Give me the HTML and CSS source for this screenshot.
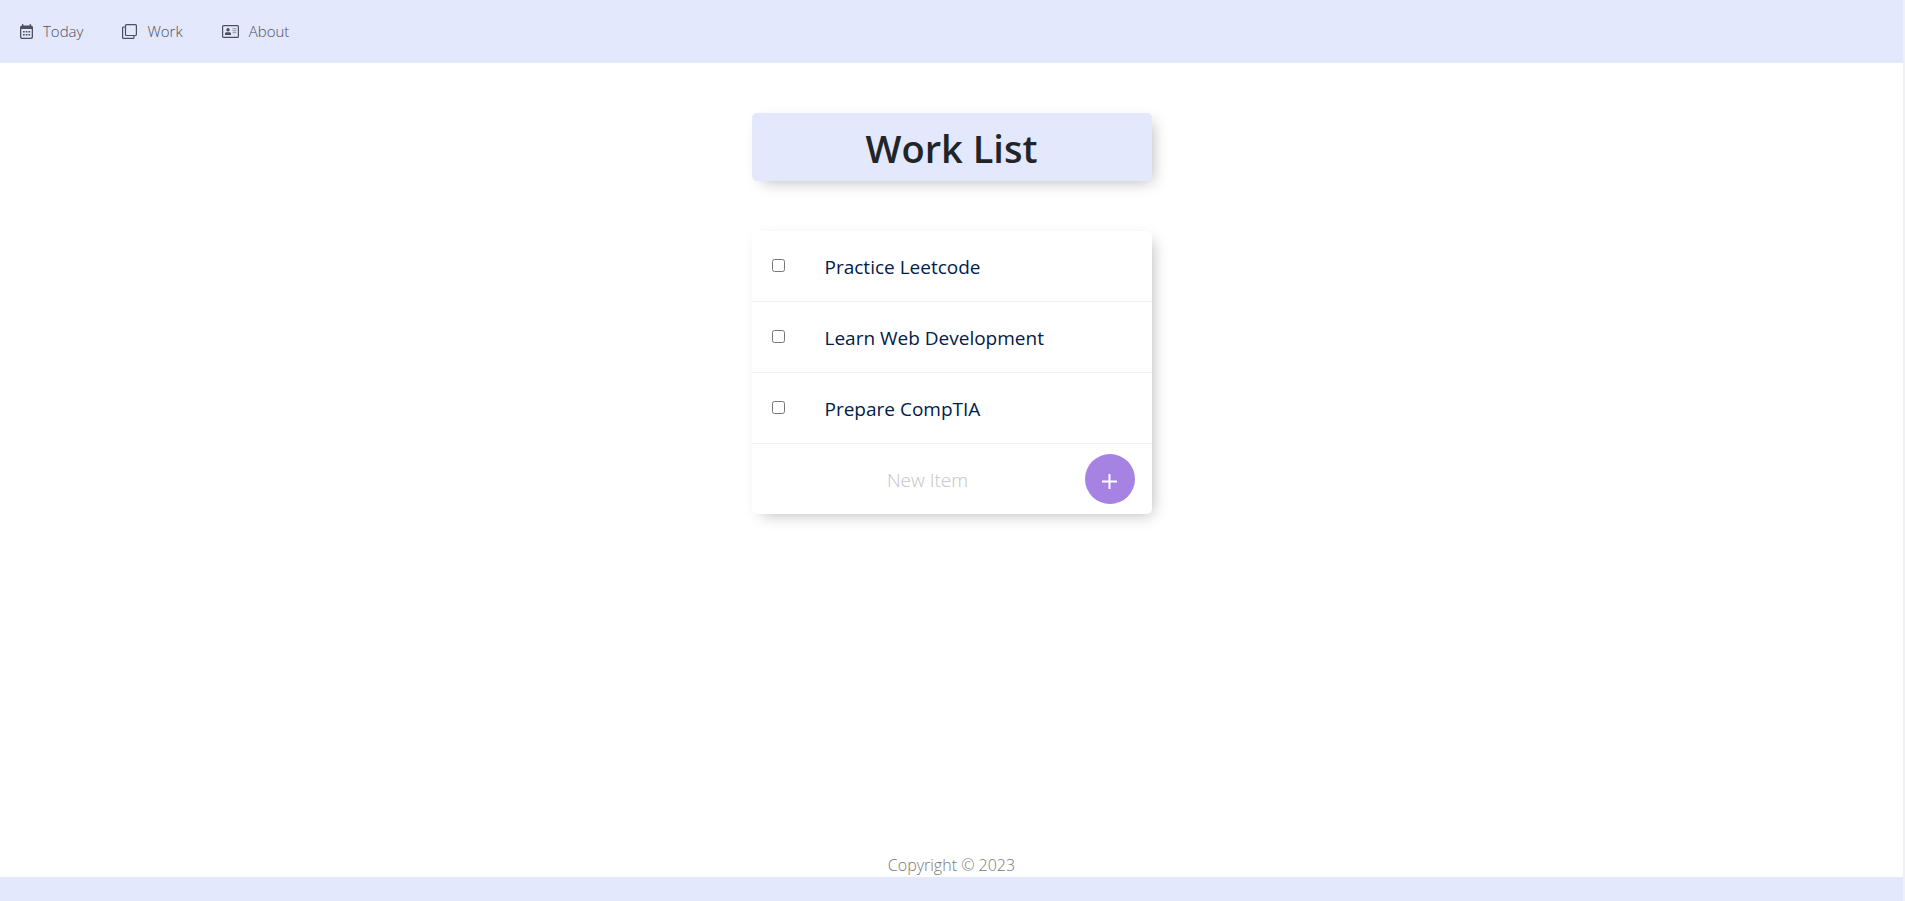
FILE: index.html
```html
<!DOCTYPE html>
<html lang="en">
<head>
<meta charset="utf-8">
<title>Work List</title>
<link rel="stylesheet" href="styles.css">
</head>
<body>
<nav class="navbar">
  <a class="nav-link" href="#today">
    <svg class="icon icon-today" viewBox="0 0 13 15" aria-hidden="true"><path fill="currentColor" fill-rule="evenodd" d="M2 1.5V.5Q2 0 2.7 0T3.4.5V1.5H9.6V.5Q9.6 0 10.3 0T11 .5V1.5Q13 1.5 13 3.5V13Q13 15 11 15H2Q0 15 0 13V3.5Q0 1.5 2 1.5ZM1.3 5V12.7Q1.3 13.7 2.3 13.7H10.7Q11.7 13.7 11.7 12.7V5Z"/><path fill="currentColor" d="M3 7h1.7v1.5H3zM5.7 7h1.7v1.5H5.7zM8.4 7h1.7v1.5H8.4zM3 10h1.7v1.5H3zM5.7 10h1.7v1.5H5.7zM8.4 10h1.7v1.5H8.4z"/></svg>
    <span>Today</span>
  </a>
  <a class="nav-link" href="#work">
    <svg class="icon icon-work" viewBox="0 0 15 15" aria-hidden="true"><g fill="none" stroke="currentColor" stroke-width="1.2"><rect x="3.5" y=".6" width="10.9" height="10.9" rx="1"/><path d="M3.5 3H1.6Q.6 3 .6 4V13.4Q.6 14.4 1.6 14.4H11Q12 14.4 12 13.4V11.5"/></g></svg>
    <span>Work</span>
  </a>
  <a class="nav-link" href="#about">
    <svg class="icon icon-about" viewBox="0 0 17 13" aria-hidden="true"><rect x=".6" y=".6" width="15.8" height="11.8" rx="1" fill="none" stroke="currentColor" stroke-width="1.2"/><g fill="currentColor"><circle cx="6" cy="4.7" r="1.7"/><path d="M3 10V8.7Q3 7.3 4.5 7.3H7.5Q9 7.3 9 8.7V10Z"/><path opacity=".55" d="M10.5 3.3h3.8v1h-3.8zM10.5 5.3h3.8v1h-3.8zM10.5 7.3h3.8v1h-3.8z"/></g></svg>
    <span>About</span>
  </a>
</nav>
<main class="content">
  <h1 class="card title">Work List</h1>
  <section class="card" aria-label="Work items">
    <label class="item"><input class="check" type="checkbox"><span>Practice Leetcode</span></label>
    <label class="item"><input class="check" type="checkbox"><span>Learn Web Development</span></label>
    <label class="item"><input class="check" type="checkbox"><span>Prepare CompTIA</span></label>
    <form class="new-item">
      <input class="new-text" type="text" placeholder="New Item" aria-label="New Item">
      <button class="add" type="button" aria-label="Add item"><svg class="plus" viewBox="0 0 15 15" aria-hidden="true"><path d="M7.5 0V15M0 7.5H15" stroke="currentColor" stroke-width="2"/></svg></button>
    </form>
  </section>
</main>
<footer class="footer">Copyright © 2023</footer>
</body>
</html>
```
FILE: styles.css
```css
* { box-sizing: border-box; }

body {
  margin: 0;
  min-height: 100vh;
  display: flex;
  flex-direction: column;
  background: #fff;
  border-right: 2px solid #f1f1f3;
  font-family: "Open Sans", "Noto Sans", sans-serif;
  font-weight: 300;
}

.navbar {
  display: flex;
  gap: 39px;
  padding: 20px;
  background: #e3e8fc;
}

.nav-link {
  display: flex;
  align-items: center;
  gap: 10px;
  color: #4d4f5e;
  font-size: 15px;
  line-height: 23px;
  text-decoration: none;
}

.icon { display: block; height: 15px; }
.icon-today { width: 13px; }
.icon-work { width: 15px; }
.icon-about { width: 17px; height: 13px; }

.content {
  flex: 1;
  display: flex;
  flex-direction: column;
  align-items: center;
  gap: 50px;
  padding: 50px 20px;
}

.card {
  width: 100%;
  max-width: 400px;
  margin: 0;
  border-radius: 5px;
  background: #fff;
  box-shadow: 5px 5px 15px -5px rgba(0, 0, 0, 0.3);
}

.title {
  padding: 11px 10px 9px;
  background: #e3e8fc;
  color: #212529;
  font-size: 38px;
  font-weight: 600;
  line-height: 48px;
  text-align: center;
}

.item {
  display: flex;
  align-items: center;
  gap: 40px;
  height: 71px;
  padding: 2px 20px 0;
  border-bottom: 1px solid #f1f1f1;
  color: #00204a;
  font-size: 19px;
  font-weight: 400;
}

.check { width: 13px; height: 13px; margin: 0 0 4px; }

.new-item {
  display: flex;
  align-items: center;
  height: 70px;
  padding: 0 17px 0 19px;
}

.new-text {
  flex: 1;
  min-width: 0;
  height: 60px;
  padding: 2px 0 0;
  border: 0;
  outline: 0;
  background: transparent;
  color: #00204a;
  font: inherit;
  font-size: 19px;
  text-align: center;
}

.new-text::placeholder { color: #c4c4c4; opacity: 1; }

.add {
  display: grid;
  place-items: center;
  width: 50px;
  height: 50px;
  padding: 4px 0 0;
  border: 0;
  border-radius: 50%;
  background: #a683e3;
  color: #fff;
}

.plus { width: 15px; height: 15px; }

.footer {
  border-bottom: 24px solid #e3e8fc;
  color: #777;
  font-size: 16px;
  line-height: 24px;
  text-align: center;
}
```
